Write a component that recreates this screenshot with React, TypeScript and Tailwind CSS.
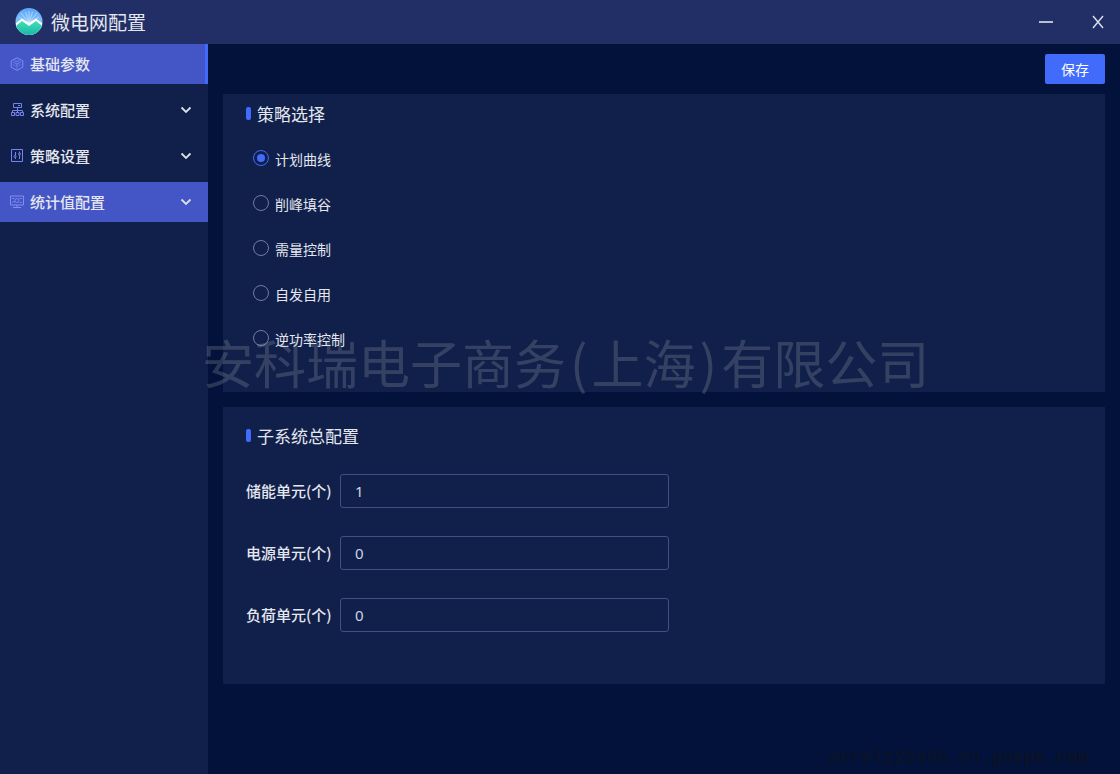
import { useState } from 'react';

const menu = [
  { label: '基础参数', icon: CubeIcon, active: true, current: true, children: false },
  { label: '系统配置', icon: NetworkIcon, active: false, current: false, children: true },
  { label: '策略设置', icon: SlidersIcon, active: false, current: false, children: true },
  { label: '统计值配置', icon: MonitorIcon, active: true, current: false, children: true },
];

const strategies = ['计划曲线', '削峰填谷', '需量控制', '自发自用', '逆功率控制'];

const units = [
  { id: 'storage', label: '储能单元(个)', value: '1' },
  { id: 'power', label: '电源单元(个)', value: '0' },
  { id: 'load', label: '负荷单元(个)', value: '0' },
];

function Logo() {
  return (
    <svg className="h-7 w-7" viewBox="0 0 28 28" aria-hidden="true">
      <defs>
        <linearGradient id="sky" x1="0" y1="0" x2="0" y2="1">
          <stop offset="0" stopColor="#5aa5f6" />
          <stop offset="0.6" stopColor="#8cc8fb" />
        </linearGradient>
        <linearGradient id="hill" x1="0" y1="0" x2="0" y2="1">
          <stop offset="0" stopColor="#3fe0b8" />
          <stop offset="1" stopColor="#17b5a5" />
        </linearGradient>
        <clipPath id="disc">
          <circle cx="14" cy="13.5" r="13.5" />
        </clipPath>
      </defs>
      <g clipPath="url(#disc)">
        <rect width="28" height="28" fill="url(#sky)" />
        <path
          d="M14 15V3M14 15 10.5 4M14 15 17.5 4M14 15 6 5M14 15 22 5M14 15 4 9M14 15 24 9"
          stroke="#d9edff"
          strokeWidth="0.6"
        />
        <path d="M0 16 7 10.5 14 15 21 10.5 28 16V28H0Z" fill="#fff" />
        <path d="M0 18.5 7 13 14 18 21 13 28 18.5V28H0Z" fill="url(#hill)" />
      </g>
    </svg>
  );
}

function CubeIcon() {
  return (
    <svg className="h-3.5 w-3.5" viewBox="0 0 14 14" fill="none" stroke="#7f8df5" aria-hidden="true">
      <path d="M7 0.8 12.8 3.8V10.2L7 13.3 1.2 10.2V3.8Z" />
      <path d="M3 5 7 7 11 5M7 7V11.5M3.5 7.5 5.5 9M10.5 7.5 8.5 9M4.5 3.5 7 4.5 9.5 3.5" strokeWidth="0.8" />
    </svg>
  );
}

function NetworkIcon() {
  return (
    <svg className="h-3.5 w-3.5" viewBox="0 0 14 14" fill="none" stroke="#7384ee" aria-hidden="true">
      <path d="M3.5 0.5H11.5V4.5H3.5ZM8 2.5H10M7.5 4.5V9M2.5 9V7.5H12.5V9M1.5 9.5H4.5V12.5H1.5ZM6 9.5H9V12.5H6ZM10.5 9.5H13.5V12.5H10.5Z" />
    </svg>
  );
}

function SlidersIcon() {
  return (
    <svg className="h-3.5 w-3.5" viewBox="0 0 14 14" fill="none" stroke="#7384ee" aria-hidden="true">
      <path d="M1.5 0.5H12.5V12.5H1.5ZM5.5 3V6.5M5.5 8.5V10M9.5 2.5V4M9.5 6V10" />
      <circle cx="5" cy="7.5" r="1" />
      <circle cx="9.5" cy="5" r="1" />
    </svg>
  );
}

function MonitorIcon() {
  return (
    <svg className="h-3.5 w-3.5" viewBox="0 0 14 14" fill="none" stroke="#7f8df5" aria-hidden="true">
      <path d="M0.5 1H13.5V10H0.5ZM3 12.5H11M7 10V12.5" />
      <path d="M2 3.5H4.5M2 8 4 6 5 7.5M9.5 3.5H12M9.5 7.5H12" strokeWidth="0.8" />
      <circle cx="7" cy="5.5" r="2" strokeWidth="0.8" />
    </svg>
  );
}

function Chevron() {
  return (
    <svg className="h-3 w-3" viewBox="0 0 12 12" fill="none" stroke="#dcdfe8" strokeWidth="1.8" aria-hidden="true">
      <path d="M1.5 3.5 6 8 10.5 3.5" />
    </svg>
  );
}

function SectionTitle({ children }: { children: string }) {
  return (
    <h2 className="flex items-center gap-1.5 text-[17px] leading-[22px]">
      <span className="mb-0.5 h-[13px] w-[5px] rounded-xs bg-[#406bfb]" />
      {children}
    </h2>
  );
}

export default function App() {
  const [strategy, setStrategy] = useState(strategies[0]);

  return (
    <div className="relative flex min-h-screen flex-col overflow-hidden bg-[#02123a] font-['Noto_Sans_CJK_SC',sans-serif] text-[#e4e7ef]">
      <header className="flex h-11 items-center bg-[#212f66] px-[15px]">
        <Logo />
        <h1 className="ml-2 text-[19px]">微电网配置</h1>
        <div className="ml-auto flex items-center gap-[38px]">
          <button type="button" aria-label="最小化">
            <svg className="h-3.5 w-3.5" viewBox="0 0 14 14" stroke="#b9bed0" strokeWidth="2" aria-hidden="true">
              <path d="M0 7H14" />
            </svg>
          </button>
          <button type="button" aria-label="关闭">
            <svg className="h-3.5 w-3.5" viewBox="0 0 14 14" stroke="#dfe2ec" strokeWidth="1.4" aria-hidden="true">
              <path d="M2 1 12 13M12 1 2 13" />
            </svg>
          </button>
        </div>
      </header>

      <div className="flex flex-1">
        <nav className="flex w-52 shrink-0 flex-col gap-1.5 bg-[#11204a]">
          {menu.map(({ label, icon: Icon, active, current, children }) => (
            <button
              key={label}
              type="button"
              className={`flex h-10 items-center gap-1.5 pl-2.5 text-[15px] font-medium ${active ? 'bg-[#4456c5]' : ''} ${
                current ? 'border-r-[3px] border-[#406bfb]' : 'pr-4'
              }`}
            >
              <Icon />
              <span>{label}</span>
              {children && (
                <span className="ml-auto">
                  <Chevron />
                </span>
              )}
            </button>
          ))}
        </nav>

        <main className="flex flex-1 flex-col px-[15px] pt-2.5">
          <button type="button" className="h-[30px] w-[60px] self-end rounded-xs bg-[#406bfb] text-sm text-white">
            保存
          </button>

          <section className="mt-2.5 bg-[#11204a] px-[23px] pt-[9px] pb-[31px]">
            <SectionTitle>策略选择</SectionTitle>
            <div className="mt-[11px] ml-[7px]">
              {strategies.map((name) => (
                <label key={name} className="flex h-[45px] w-fit items-center gap-1.5 text-sm">
                  <input
                    type="radio"
                    name="strategy"
                    checked={strategy === name}
                    onChange={() => setStrategy(name)}
                    className="mb-0.5 h-4 w-4 appearance-none rounded-full border border-[#6f7ba6] bg-clip-content p-[3px] checked:border-[#406bfb] checked:bg-[#406bfb]"
                  />
                  {name}
                </label>
              ))}
            </div>
          </section>

          <section className="mt-[15px] bg-[#11204a] px-[23px] pt-[18px] pb-[52px]">
            <SectionTitle>子系统总配置</SectionTitle>
            <div className="mt-[27px] flex flex-col gap-7">
              {units.map((unit) => (
                <div key={unit.id} className="flex items-center">
                  <label htmlFor={unit.id} className="w-[94px] text-[15px] font-medium">
                    {unit.label}
                  </label>
                  <input
                    id={unit.id}
                    defaultValue={unit.value}
                    className="h-[34px] w-[329px] rounded-[3px] border border-[#424f80] bg-transparent px-3.5 font-['Noto_Sans',sans-serif] text-[15px] text-[#cfd4e6]"
                  />
                </div>
              ))}
            </div>
          </section>
        </main>
      </div>

      <div className="pointer-events-none absolute top-[324px] left-[202px] text-[52px] leading-[76px] whitespace-nowrap text-[#c8c8c8]/20">
        安科瑞电子商务<span className="px-1">(</span>上海<span className="px-1">)</span>有限公司
      </div>
      <div className="pointer-events-none absolute right-8 bottom-0.5 font-['Liberation_Mono',monospace] text-lg text-[#141414]/70">
        acrel123456.cn.goepe.com
      </div>
    </div>
  );
}
